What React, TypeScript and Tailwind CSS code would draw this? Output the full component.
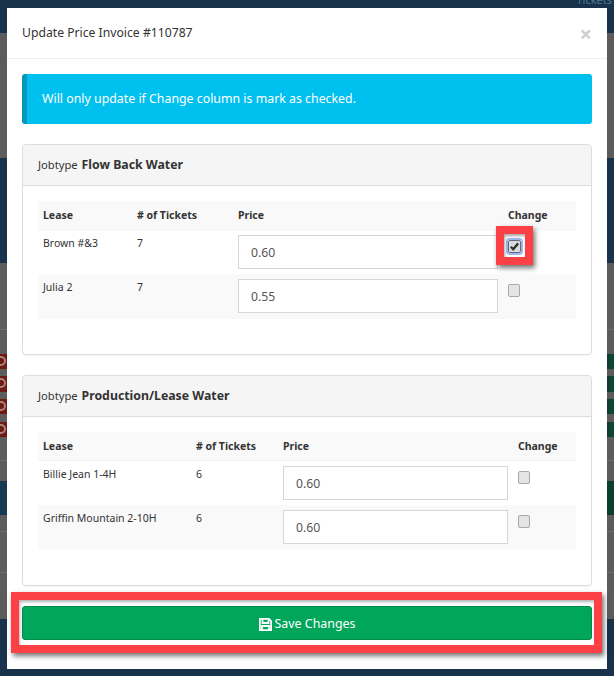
import React from "react";

function Box({ checked = false }: { checked?: boolean }) {
  return (
    <div className={checked
      ? "mt-[10px] w-[13px] h-[13px] rounded-[2px] border border-[#5f6a80] bg-[#dcdcdc] outline-2 outline-[#9db8ea] flex items-center justify-center"
      : "mt-[10px] w-[12px] h-[13px] rounded-[2px] border border-[#a9a9a9] bg-[#e4e4e4]"}>
      {checked && (
        <svg viewBox="0 0 12 12" className="w-[11px] h-[11px]">
          <path d="M2 6.3 L4.6 9 L10 2.6" fill="none" stroke="#333" strokeWidth="2.6" />
        </svg>
      )}
    </div>
  );
}

type Row = { lease: string; tickets: string; price: string; checked?: boolean };

function Panel({ name, cols, rows, inputW }: { name: string; cols: string; rows: Row[]; inputW: string }) {
  return (
    <section className="h-[211px] border border-[#dddddd] rounded-[4px] bg-white shadow-[0_1px_1px_rgba(0,0,0,0.05)]">
      <div className="h-[41px] bg-[#f5f5f5] border-b border-[#dddddd] rounded-t-[4px] px-[15px] flex items-center text-[11.2px] text-[#333]">
        <span className="pr-[1px]">Jobtype&nbsp;</span><b className="text-[12.3px] font-bold">{name}</b>
      </div>
      <div className="mx-[15px] mt-[15px]">
        <div className={`grid ${cols} h-[29px] pt-[2px] items-center bg-[#f9f9f9] border-b border-[#f2f2f2] text-[10.5px] font-bold text-[#333] px-[5px]`}>
          <span>Lease</span><span># of Tickets</span><span>Price</span><span>Change</span>
        </div>
        {rows.map((r, i) => (
          <div key={r.lease} className={`grid ${cols} px-[5px] ${i % 2 ? "h-[45px] bg-[#f9f9f9]" : "h-[44px]"} text-[10.5px] text-[#333]`}>
            <span className="pt-[6px]">{r.lease}</span>
            <span className="pt-[6px]">{r.tickets}</span>
            <input
              readOnly
              value={r.price}
              className={`${inputW} h-[34px] mt-[5px] border border-[#d2d6de] bg-white px-[12px] text-[12.2px] text-[#555] outline-none`}
            />
            <Box checked={r.checked} />
          </div>
        ))}
      </div>
    </section>
  );
}

type Band = { h: string; c: string; glyph?: boolean };

function Strip({ bands }: { bands: Band[] }) {
  return (
    <div className="w-[7px] h-[661px] flex flex-col overflow-hidden">
      {bands.map((b, i) => (
        <div key={i} className={`${b.h} ${b.c} shrink-0 overflow-hidden`}>
          {b.glyph && <div className="-ml-[4px] mt-[2px] w-[10px] h-[10px] rounded-full border-2 border-[#a88480]" />}
        </div>
      ))}
    </div>
  );
}

const gray = "bg-[#5c5c5c]";
const line = "bg-[#5c5c5c] border-t border-[#6e6e6e]";
const navy = "bg-[#17324a]";
const red = "bg-[#6f1a12]";
const green = "ml-[2px] rounded-l-[2px] bg-[#0a4a2b]";

export default function App() {
  return (
    <div className="relative w-[614px] h-[676px] overflow-hidden bg-[#17324a] font-['Noto_Sans',sans-serif]">
      <div className="h-[8px] flex justify-end overflow-hidden pr-[2px] text-[11px] leading-[14px] text-[#4e7a94]">
        <span className="-mt-[7px]">Tickets</span>
      </div>
      <div className="flex h-[661px]">
        <Strip bands={[
          { h: "h-[25px]", c: navy },
          { h: "h-[125px]", c: gray },
          { h: "h-[105px]", c: navy },
          { h: "h-[66px]", c: gray },
          { h: "h-[25px]", c: line },
          { h: "h-[15px]", c: red, glyph: true },
          { h: "h-[7px]", c: gray },
          { h: "h-[16px]", c: red, glyph: true },
          { h: "h-[7px]", c: gray },
          { h: "h-[15px]", c: red, glyph: true },
          { h: "h-[8px]", c: gray },
          { h: "h-[15px]", c: red, glyph: true },
          { h: "h-[23px]", c: gray },
          { h: "h-[21px]", c: line },
          { h: "h-[34px]", c: "bg-[#173a50]" },
          { h: "h-[16px]", c: gray },
          { h: "h-[41px]", c: line },
          { h: "h-[47px]", c: line },
          { h: "h-[50px]", c: navy },
        ]} />
        <main className="w-[600px] h-[661px] bg-white">
          <header className="h-[51px] border-b border-[#f0f0f0] pl-[15px] pr-[15px] flex items-center justify-between">
            <h1 className="pt-[1px] text-[12.2px] text-[#333] font-normal">Update Price Invoice #110787</h1>
            <span className="pb-[1px] text-[22px] font-bold leading-none text-[#cfcfcf]">×</span>
          </header>
          <div className="px-[15px] pt-[15px]">
            <div className="h-[50px] rounded-[3px] border-l-[5px] border-[#0097bc] bg-[#00c0ef] pl-[15px] flex items-center text-[12.35px] text-white">
              Will only update if Change column is mark as checked.
            </div>
            <div className="mt-[20px] flex flex-col gap-[20px]">
              <Panel
                name="Flow Back Water"
                cols="grid-cols-[94px_101px_270px_68px]"
                inputW="w-[260px]"
                rows={[
                  { lease: "Brown #&3", tickets: "7", price: "0.60", checked: true },
                  { lease: "Julia 2", tickets: "7", price: "0.55" },
                ]}
              />
              <Panel
                name="Production/Lease Water"
                cols="grid-cols-[153px_87px_235px_58px]"
                inputW="w-[225px]"
                rows={[
                  { lease: "Billie Jean 1-4H", tickets: "6", price: "0.60" },
                  { lease: "Griffin Mountain 2-10H", tickets: "6", price: "0.60" },
                ]}
              />
            </div>
            <button className="mt-[20px] w-full h-[34px] pt-[2px] rounded-[3px] border border-[#008d4c] bg-[#00a65a] text-[12.4px] text-white flex items-center justify-center gap-[3px]">
              <svg viewBox="0 0 13 13" className="w-[13px] h-[13px]" fill="none" stroke="#fff" strokeWidth="1.8">
                <path d="M.9 .9H10L12.1 3V12.1H.9Z" />
                <path d="M3.5 1V5H9.5V1" />
                <path d="M3 12V8H10V12" />
              </svg>
              Save Changes
            </button>
          </div>
        </main>
        <Strip bands={[
          { h: "h-[25px]", c: navy },
          { h: "h-[125px]", c: gray },
          { h: "h-[105px]", c: navy },
          { h: "h-[66px]", c: gray },
          { h: "h-[25px]", c: line },
          { h: "h-[15px]", c: green },
          { h: "h-[7px]", c: gray },
          { h: "h-[16px]", c: green },
          { h: "h-[7px]", c: gray },
          { h: "h-[15px]", c: green },
          { h: "h-[8px]", c: gray },
          { h: "h-[15px]", c: green },
          { h: "h-[23px]", c: gray },
          { h: "h-[21px]", c: line },
          { h: "h-[34px]", c: "bg-[#0a4029]" },
          { h: "h-[16px]", c: gray },
          { h: "h-[41px]", c: line },
          { h: "h-[47px]", c: line },
          { h: "h-[50px]", c: navy },
        ]} />
      </div>

      {/* annotation highlights over the page */}
      <div className="absolute left-[496px] top-[226px] w-[37px] h-[39px] border-[8px] border-[#fb4146] shadow-[2px_3px_5px_rgba(0,0,0,0.55),inset_1px_2px_3px_rgba(0,0,0,0.35)]" />
      <div className="absolute left-[11px] top-[592px] w-[591px] h-[61px] border-[8px] border-[#fb4146] shadow-[2px_3px_5px_rgba(0,0,0,0.55),inset_1px_2px_3px_rgba(0,0,0,0.3)]" />
    </div>
  );
}
